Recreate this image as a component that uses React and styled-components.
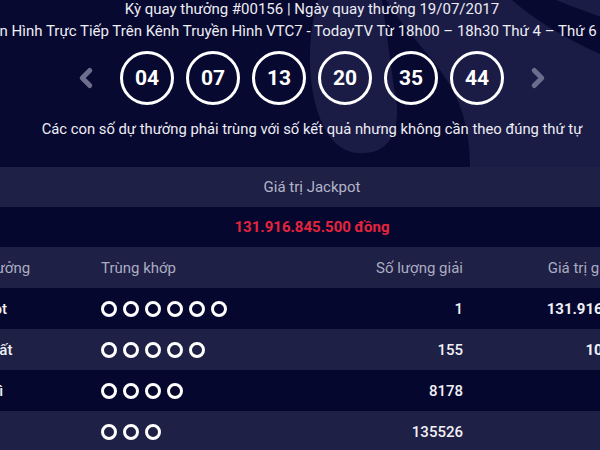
import React from 'react';
import styled, { createGlobalStyle } from 'styled-components';
import { ChevronLeft, ChevronRight } from 'lucide-react';

const GlobalStyle = createGlobalStyle`
  html, body {
    margin: 0;
    padding: 0;
    background: #1f2045;
    font-family: Roboto, "Noto Sans", sans-serif;
  }
`;

const numbers = ['04', '07', '13', '20', '35', '44'];

const prizes = [
  { name: 'Jackpot', match: 6, count: '1', value: '131.916.845.500' },
  { name: 'Giải nhất', match: 5, count: '155', value: '10.000.000' },
  { name: 'Giải nhì', match: 4, count: '8178', value: '300.000' },
  { name: 'Giải ba', match: 3, count: '135526', value: '30.000' },
];

const App = () => {
  return (
    <Viewport>
      <GlobalStyle />
      <Stage>
        <Hero>
          <HeroArt viewBox="-68 0 760 167" preserveAspectRatio="none">
            <path d="M318 0 C300 60 312 150 358 153 C396 156 402 120 394 88 L382 0 Z" />
            <path d="M386 0 L512 0 C535 20 565 38 600 54 L692 60 L692 167 L470 167 C470 130 462 100 440 70 C418 42 398 20 386 0 Z" />
            <path d="M556 0 L692 0 L692 46 C640 30 590 14 556 0 Z" />
          </HeroArt>
          <HeroContent>
            <DrawTitle>Kỳ quay thưởng #00156 | Ngày quay thưởng 19/07/2017</DrawTitle>
            <Broadcast>
              Xem Quay Thưởng Truyền Hình Trực Tiếp Trên Kênh Truyền Hình VTC7 - TodayTV Từ 18h00 – 18h30 Thứ 4 – Thứ 6 – Chủ Nhật Hàng Tuần
            </Broadcast>
            <BallRow>
              <Arrow><ChevronLeft size={30} strokeWidth={4} /></Arrow>
              <Balls>
                {numbers.map((n) => (
                  <Ball key={n}>{n}</Ball>
                ))}
              </Balls>
              <Arrow><ChevronRight size={30} strokeWidth={4} /></Arrow>
            </BallRow>
            <Caption>Các con số dự thưởng phải trùng với số kết quả nhưng không cần theo đúng thứ tự</Caption>
          </HeroContent>
        </Hero>

        <JackpotLabel>Giá trị Jackpot</JackpotLabel>
        <JackpotValue>131.916.845.500 đồng</JackpotValue>

        <Row>
          <HeadCell>Giải thưởng</HeadCell>
          <HeadCell>Trùng khớp</HeadCell>
          <HeadCell $right>Số lượng giải</HeadCell>
          <HeadCell $right>Giá trị giải (đồng)</HeadCell>
        </Row>
        {prizes.map((p, i) => (
          <Row key={p.name} $dark={i % 2 === 0}>
            <Cell>{p.name}</Cell>
            <Cell>
              <Dots>
                {Array.from({ length: p.match }).map((_, k) => (
                  <Dot key={k} />
                ))}
              </Dots>
            </Cell>
            <Cell $right>{p.count}</Cell>
            <Cell $right $bold>{p.value}</Cell>
          </Row>
        ))}
      </Stage>
    </Viewport>
  );
};

const Viewport = styled.div`
  width: 600px;
  height: 450px;
  overflow: hidden;
  background: #1f2045;
`;

const Stage = styled.div`
  width: 760px;
  margin-left: -68px;
`;

const Hero = styled.section`
  position: relative;
  height: 167px;
  background: #080930;
  overflow: hidden;
`;

const HeroArt = styled.svg`
  position: absolute;
  inset: 0;
  width: 100%;
  height: 100%;
  fill: #1b1c46;
`;

const HeroContent = styled.div`
  position: relative;
  display: flex;
  flex-direction: column;
  align-items: center;
  color: #ededf4;
`;

const DrawTitle = styled.div`
  font-size: 15px;
  line-height: 20px;
  margin-top: -1px;
  white-space: nowrap;
`;

const Broadcast = styled.div`
  font-size: 15px;
  line-height: 20px;
  margin-top: 2px;
  padding-right: 36px;
  white-space: nowrap;
`;

const BallRow = styled.div`
  display: flex;
  align-items: center;
  margin-top: 10px;
`;

const Arrow = styled.div`
  display: flex;
  color: #6c6e8e;
  margin: 0 19px;
`;

const Balls = styled.div`
  display: flex;
  gap: 12px;
`;

const Ball = styled.div`
  width: 54px;
  height: 54px;
  box-sizing: border-box;
  border: 3px solid #ffffff;
  border-radius: 50%;
  display: flex;
  align-items: center;
  justify-content: center;
  font-size: 21px;
  font-weight: 700;
  color: #ffffff;
`;

const Caption = styled.div`
  font-size: 14.8px;
  line-height: 20px;
  margin-top: 14px;
  white-space: nowrap;
`;

const JackpotLabel = styled.div`
  height: 40px;
  display: flex;
  align-items: center;
  justify-content: center;
  background: #1f2045;
  color: #b3b4c8;
  font-size: 15px;
`;

const JackpotValue = styled.div`
  height: 40px;
  display: flex;
  align-items: center;
  justify-content: center;
  background: #06072e;
  color: #e5243d;
  font-size: 15px;
  font-weight: 700;
`;

const Row = styled.div`
  display: grid;
  grid-template-columns: 148px 182px 180px 200px;
  align-items: center;
  height: 41px;
  padding: 0 29px 0 21px;
  background: ${(p) => (p.$dark ? '#06072e' : '#1f2045')};
`;

const HeadCell = styled.div`
  font-size: 15px;
  color: #abacc2;
  text-align: ${(p) => (p.$right ? 'right' : 'left')};
  white-space: nowrap;
`;

const Cell = styled.div`
  font-size: 15px;
  color: #f1f1f6;
  font-weight: ${(p) => (p.$bold ? 700 : 500)};
  text-align: ${(p) => (p.$right ? 'right' : 'left')};
  white-space: nowrap;
`;

const Dots = styled.div`
  display: flex;
  gap: 6px;
`;

const Dot = styled.span`
  width: 16px;
  height: 16px;
  box-sizing: border-box;
  border: 3px solid #ffffff;
  border-radius: 50%;
`;

export default App;
